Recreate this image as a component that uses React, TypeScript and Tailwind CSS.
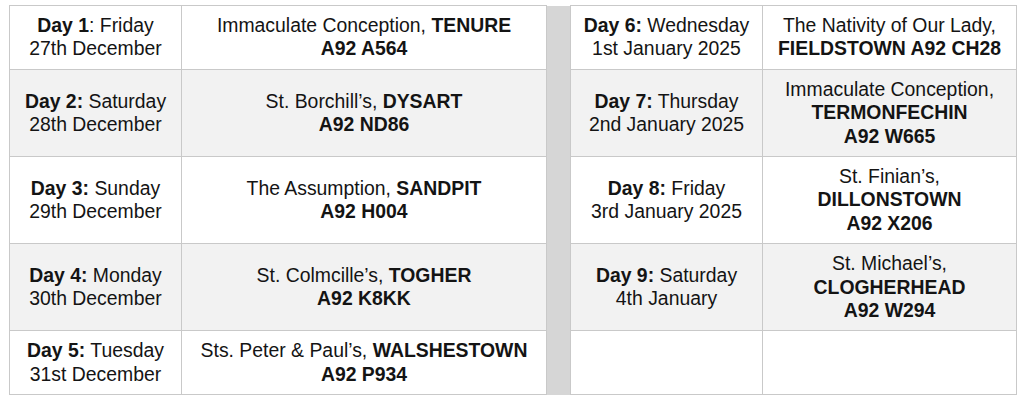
import React from 'react';

type Cell = { day: React.ReactNode; date: string; church: React.ReactNode };

const left: Cell[] = [
  {
    day: <><b>Day 1</b>: Friday</>,
    date: '27th December',
    church: <>Immaculate Conception, <b>TENURE</b><br /><b>A92 A564</b></>,
  },
  {
    day: <><b>Day 2:</b> Saturday</>,
    date: '28th December',
    church: <>St. Borchill’s, <b>DYSART</b><br /><b>A92 ND86</b></>,
  },
  {
    day: <><b>Day 3:</b> Sunday</>,
    date: '29th December',
    church: <>The Assumption, <b>SANDPIT</b><br /><b>A92 H004</b></>,
  },
  {
    day: <><b>Day 4:</b> Monday</>,
    date: '30th December',
    church: <>St. Colmcille’s, <b>TOGHER</b><br /><b>A92 K8KK</b></>,
  },
  {
    day: <><b>Day 5:</b> Tuesday</>,
    date: '31st December',
    church: <>Sts. Peter &amp; Paul’s, <b>WALSHESTOWN</b><br /><b>A92 P934</b></>,
  },
];

const right: (Cell | null)[] = [
  {
    day: <><b>Day 6:</b> Wednesday</>,
    date: '1st January 2025',
    church: <>The Nativity of Our Lady,<br /><b>FIELDSTOWN A92 CH28</b></>,
  },
  {
    day: <><b>Day 7:</b> Thursday</>,
    date: '2nd January 2025',
    church: <>Immaculate Conception,<br /><b>TERMONFECHIN</b><br /><b>A92 W665</b></>,
  },
  {
    day: <><b>Day 8:</b> Friday</>,
    date: '3rd January 2025',
    church: <>St. Finian’s,<br /><b>DILLONSTOWN</b><br /><b>A92 X206</b></>,
  },
  {
    day: <><b>Day 9:</b> Saturday</>,
    date: '4th January',
    church: <>St. Michael’s,<br /><b>CLOGHERHEAD</b><br /><b>A92 W294</b></>,
  },
  null,
];

const td = 'border border-[#c9c9c9] px-1 py-2 text-center align-middle';

export default function App() {
  return (
    <div className="w-[1024px] h-[406px] bg-white pl-[9px] pt-[5px] font-['Liberation_Sans',Arial,sans-serif] text-[19.4px] leading-[23.4px] text-[#141414]">
      <table className="w-[1007px] table-fixed border-collapse">
        <colgroup>
          <col className="w-[172px]" />
          <col className="w-[365px]" />
          <col className="w-[24px]" />
          <col className="w-[192px]" />
          <col className="w-[254px]" />
        </colgroup>
        <tbody>
          {left.map((l, i) => {
            const r = right[i];
            const bg = i % 2 === 1 ? 'bg-[#f2f2f2]' : 'bg-white';
            return (
              <tr key={i} className={bg}>
                <td className={td}>
                  {l.day}
                  <br />
                  {l.date}
                </td>
                <td className={td}>{l.church}</td>
                {i === 0 && (
                  <td rowSpan={5} className="border-x border-[#c9c9c9] bg-[#d6d6d6]" />
                )}
                <td className={td}>
                  {r && (
                    <>
                      {r.day}
                      <br />
                      {r.date}
                    </>
                  )}
                </td>
                <td className={td}>{r && r.church}</td>
              </tr>
            );
          })}
        </tbody>
      </table>
    </div>
  );
}
